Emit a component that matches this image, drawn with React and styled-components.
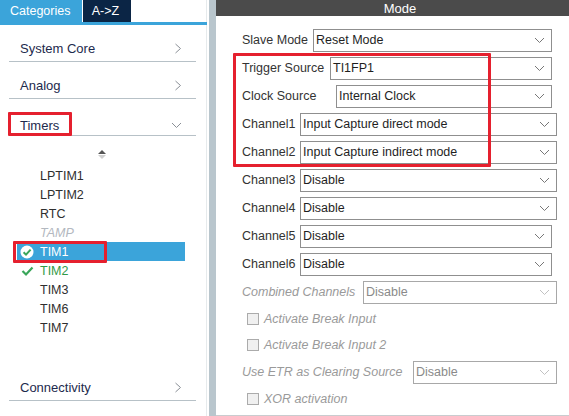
import React from "react";
import styled, { createGlobalStyle, css } from "styled-components";

const GlobalStyle = createGlobalStyle`
  html, body { margin: 0; padding: 0; background: #fff; }
  body { font-family: "Liberation Sans", Arial, sans-serif; }
  * { box-sizing: border-box; }
`;

const Root = styled.div`
  display: flex;
  width: 569px;
  height: 416px;
  overflow: hidden;
  background: #fff;
`;

/* ---------- left panel ---------- */
const LeftPanel = styled.div`
  width: 207px;
  margin-right: 2px;
  border-right: 1px solid #e6eaec;
  display: flex;
  flex-direction: column;
`;

const Tabs = styled.div`
  display: flex;
  height: 22px;
  border-bottom: 3px solid #3ba4da;
  box-sizing: content-box;
  margin-right: -1px;
`;

const Tab = styled.div`
  height: 22px;
  display: flex;
  align-items: center;
  font-size: 12.5px;
  color: #fff;
  ${(p) =>
    p.$active
      ? css`
          width: 82px;
          padding-left: 10px;
          background: #3ba4da;
        `
      : css`
          width: 48px;
          margin-left: 1px;
          justify-content: center;
          padding-right: 3px;
          background: #0b2545;
        `}
`;

const CategoryList = styled.div`
  flex: 1;
  display: flex;
  flex-direction: column;
  padding: 0 10px 0 9px;
`;

const CategoryRow = styled.div`
  height: 37px;
  display: flex;
  align-items: flex-end;
  justify-content: space-between;
  padding: 0 14px ${(p) => p.$pb ?? 4}px 11px;
  border-bottom: 1px solid #b7c1c7;
  font-size: 13px;
  color: #1d2a4d;
  line-height: 16px;
  ${(p) => p.$pushDown && css`margin-top: auto; margin-bottom: 15px;`}
`;

const ChevronSlot = styled.span`
  display: flex;
  margin-bottom: ${(p) => p.$mb}px;
`;

const Annotated = styled.span`
  position: relative;
  &::after {
    content: "";
    position: absolute;
    border: 3px solid #e5202e;
    border-radius: 1px;
    pointer-events: none;
    ${(p) => p.$box}
  }
`;

const SubList = styled.div`
  display: flex;
  flex-direction: column;
  padding-top: 14px;
`;

const ScrollArrows = styled.div`
  display: flex;
  flex-direction: column;
  align-items: center;
  gap: 1px;
  margin: 0 0 7px 81px;
  width: 24px;
`;

const Tri = styled.div`
  width: 0;
  height: 0;
  border-left: 4px solid transparent;
  border-right: 4px solid transparent;
  ${(p) =>
    p.$up
      ? css`border-bottom: 4px solid #555;`
      : css`border-top: 4px solid #cfcfcf;`}
`;

const SubItem = styled.div`
  position: relative;
  height: 19px;
  display: flex;
  align-items: center;
  margin-left: 8px;
  width: 168px;
  padding-left: 23px;
  font-size: 12.5px;
  color: ${(p) => (p.$selected ? "#fff" : p.$ok ? "#2f9a47" : p.$disabled ? "#b3b8c0" : "#2e2e2e")};
  font-style: ${(p) => (p.$disabled ? "italic" : "normal")};
  background: ${(p) => (p.$selected ? "#3ba4da" : "transparent")};
`;

const IconSlot = styled.span`
  position: absolute;
  left: ${(p) => p.$left}px;
  top: 50%;
  transform: translateY(-50%);
  display: flex;
`;

const ChevronRight = () => (
  <svg width="8" height="11" viewBox="0 0 8 11">
    <polyline points="1.5,1 6.5,5.5 1.5,10" fill="none" stroke="#8a8f96" strokeWidth="1" />
  </svg>
);

const ChevronDown = ({ color = "#777" }) => (
  <svg width="11" height="7" viewBox="0 0 11 7">
    <polyline points="1,1 5.5,5.5 10,1" fill="none" stroke={color} strokeWidth="1" />
  </svg>
);

const CircleCheck = () => (
  <svg width="14" height="14" viewBox="0 0 14 14">
    <circle cx="7" cy="7" r="6.5" fill="#fff" />
    <polyline points="3.6,7.2 6,9.6 10.6,4.6" fill="none" stroke="#3aa65a" strokeWidth="2" />
  </svg>
);

const Check = () => (
  <svg width="13" height="11" viewBox="0 0 13 11">
    <polyline points="1.5,5.5 5,9 11.5,2" fill="none" stroke="#3aa65a" strokeWidth="2.2" />
  </svg>
);

/* ---------- divider ---------- */
const Divider = styled.div`
  width: 7px;
  background: #b9c6cd;
  flex-shrink: 0;
`;

/* ---------- right panel ---------- */
const RightPanel = styled.div`
  flex: 1;
  display: flex;
  flex-direction: column;
  border-bottom: 1px solid #c9cccf;
`;

const Header = styled.div`
  height: 16px;
  background: #4b4b4b;
  color: #fff;
  font-size: 13px;
  display: flex;
  align-items: center;
  justify-content: center;
  padding-left: 15px;
`;

const Form = styled.div`
  display: flex;
  flex-direction: column;
  padding: 10px 0 0 26px;
`;

const Group = styled.div`
  position: relative;
  display: flex;
  flex-direction: column;
  &::after {
    content: "";
    position: absolute;
    top: -1px;
    bottom: -1px;
    left: -9px;
    width: 252px;
    border: 3px solid #e5202e;
    border-radius: 1px;
    pointer-events: none;
  }
`;

const Row = styled.div`
  display: flex;
  align-items: center;
  height: 28px;
  padding-right: ${(p) => (p.$wide ? 12 : 17)}px;
`;

const Label = styled.span`
  width: ${(p) => p.$w}px;
  flex-shrink: 0;
  font-size: 12.5px;
  white-space: nowrap;
  color: ${(p) => (p.$disabled ? "#9a9a9a" : "#333")};
  font-style: ${(p) => (p.$disabled ? "italic" : "normal")};
`;

const Select = styled.div`
  flex: 1;
  height: 23px;
  border: 1px solid ${(p) => (p.$disabled ? "#a8a8a8" : "#8f8f8f")};
  display: flex;
  align-items: center;
  justify-content: space-between;
  padding: 0 6px 0 2px;
  font-size: 12.5px;
  color: ${(p) => (p.$disabled ? "#8a8a8a" : "#1f1f1f")};
  background: #fff;
`;

const CheckRow = styled.label`
  display: flex;
  align-items: center;
  gap: 5px;
  height: 26px;
  padding-left: 5px;
  font-size: 12.5px;
  font-style: italic;
  color: #9a9a9a;
`;

const Box = styled.span`
  width: 12px;
  height: 12px;
  border: 1px solid #ababab;
  background: #f0f0f0;
`;

const Field = ({ label, w, value, wide, disabled }) => (
  <Row $wide={wide}>
    <Label $w={w} $disabled={disabled}>{label}</Label>
    <Select $disabled={disabled}>
      <span>{value}</span>
      <ChevronDown color={disabled ? "#c2c2c2" : "#777"} />
    </Select>
  </Row>
);

const subItems = [
  { name: "LPTIM1" },
  { name: "LPTIM2" },
  { name: "RTC" },
  { name: "TAMP", disabled: true },
  { name: "TIM1", selected: true },
  { name: "TIM2", ok: true },
  { name: "TIM3" },
  { name: "TIM6" },
  { name: "TIM7" },
];

export default function App() {
  return (
    <>
      <GlobalStyle />
      <Root>
        <LeftPanel>
          <Tabs>
            <Tab $active>Categories</Tab>
            <Tab>A-&gt;Z</Tab>
          </Tabs>
          <CategoryList>
            <CategoryRow>
              <span>System Core</span>
              <ChevronSlot $mb={3}>
                <ChevronRight />
              </ChevronSlot>
            </CategoryRow>
            <CategoryRow>
              <span>Analog</span>
              <ChevronSlot $mb={3}>
                <ChevronRight />
              </ChevronSlot>
            </CategoryRow>
            <CategoryRow $pb={1}>
              <Annotated $box={css`left: -12px; right: -13px; top: -6px; bottom: -2px;`}>
                Timers
              </Annotated>
              <ChevronSlot $mb={5}>
                <ChevronDown color="#8a8f96" />
              </ChevronSlot>
            </CategoryRow>
            <SubList>
              <ScrollArrows>
                <Tri $up />
                <Tri />
              </ScrollArrows>
              {subItems.map((it) => (
                <SubItem
                  key={it.name}
                  $selected={it.selected}
                  $ok={it.ok}
                  $disabled={it.disabled}
                >
                  {it.selected && (
                    <IconSlot $left={3}>
                      <CircleCheck />
                    </IconSlot>
                  )}
                  {it.ok && (
                    <IconSlot $left={4}>
                      <Check />
                    </IconSlot>
                  )}
                  {it.selected ? (
                    <Annotated $box={css`left: -27px; right: -39px; top: -4px; bottom: -4px;`}>
                      {it.name}
                    </Annotated>
                  ) : (
                    it.name
                  )}
                </SubItem>
              ))}
            </SubList>
            <CategoryRow $pushDown>
              <span>Connectivity</span>
              <ChevronSlot $mb={3}>
                <ChevronRight />
              </ChevronSlot>
            </CategoryRow>
          </CategoryList>
        </LeftPanel>
        <Divider />
        <RightPanel>
          <Header>Mode</Header>
          <Form>
            <Field label="Slave Mode" w={71} value="Reset Mode" />
            <Group>
              <Field label="Trigger Source" w={88} value="TI1FP1" />
              <Field label="Clock Source" w={94} value="Internal Clock" />
              <Field label="Channel1" w={58} value="Input Capture direct mode" wide />
              <Field label="Channel2" w={58} value="Input Capture indirect mode" wide />
            </Group>
            <Field label="Channel3" w={58} value="Disable" wide />
            <Field label="Channel4" w={58} value="Disable" wide />
            <Field label="Channel5" w={58} value="Disable" />
            <Field label="Channel6" w={58} value="Disable" />
            <Field label="Combined Channels" w={121} value="Disable" wide disabled />
            <CheckRow>
              <Box />
              Activate Break Input
            </CheckRow>
            <CheckRow>
              <Box />
              Activate Break Input 2
            </CheckRow>
            <Field label="Use ETR as Clearing Source" w={171} value="Disable" wide disabled />
            <CheckRow>
              <Box />
              XOR activation
            </CheckRow>
          </Form>
        </RightPanel>
      </Root>
    </>
  );
}
